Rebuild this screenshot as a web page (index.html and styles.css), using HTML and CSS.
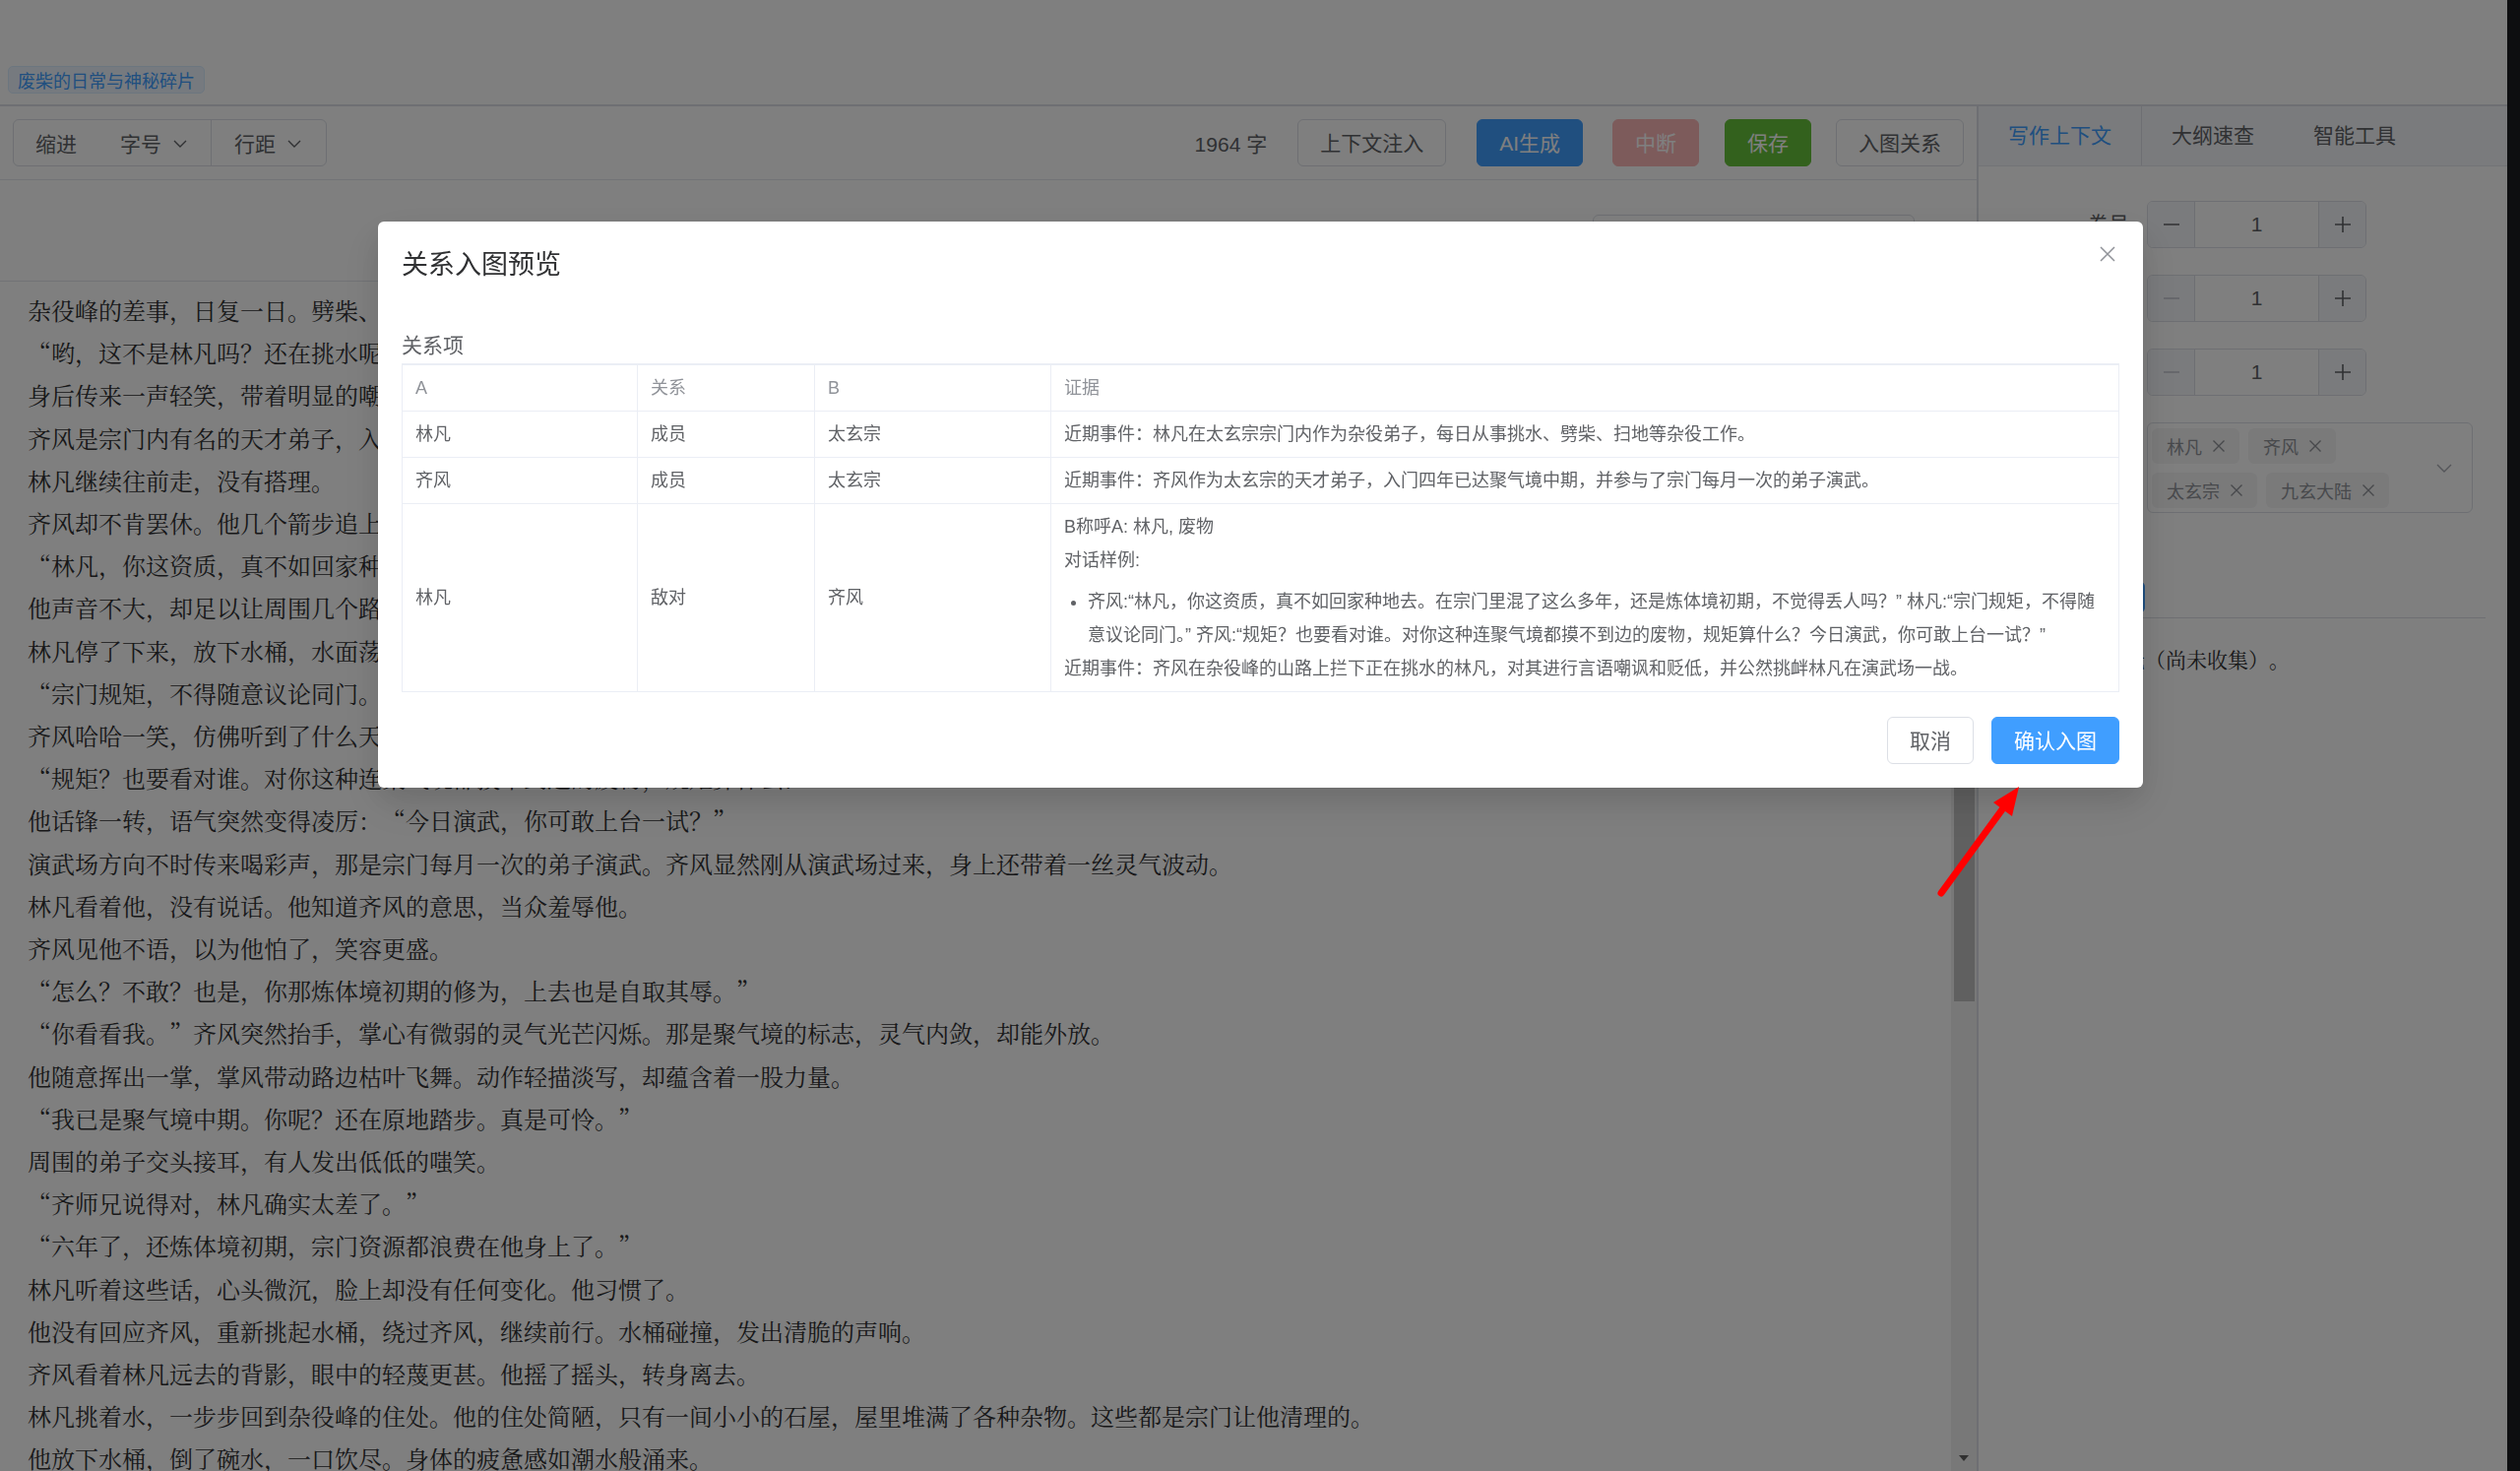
FILE: index.html
```html
<!DOCTYPE html>
<html lang="zh-CN">
<head>
<meta charset="utf-8">
<title>关系入图预览</title>
<link rel="stylesheet" href="styles.css">
</head>
<body>
<div class="app">
  <div class="page">
    <header class="topbar">
      <span class="chapter-tag">废柴的日常与神秘碎片</span>
    </header>
    <div class="main">
      <section class="editor">
        <div class="toolbar">
          <div class="btn-group">
            <span class="seg seg-indent">缩进</span>
            <span class="seg seg-size">字号<svg class="chev" viewBox="0 0 14 8" width="14" height="8"><path d="M1 1l6 6 6-6" fill="none" stroke="#606266" stroke-width="1.4"/></svg></span>
            <span class="seg seg-line">行距<svg class="chev" viewBox="0 0 14 8" width="14" height="8"><path d="M1 1l6 6 6-6" fill="none" stroke="#606266" stroke-width="1.4"/></svg></span>
          </div>
          <span class="word-count">1964 字</span>
          <button class="btn btn-plain tb-ctx">上下文注入</button>
          <button class="btn btn-primary tb-ai">AI生成</button>
          <button class="btn btn-danger-disabled tb-stop">中断</button>
          <button class="btn btn-success tb-save">保存</button>
          <button class="btn btn-plain tb-graph">入图关系</button>
        </div>
        <div class="subbar"><div class="sub-input"></div></div>
        <div class="content">
          <div class="text">
            <p>杂役峰的差事，日复一日。劈柴、挑水、扫地，林凡已经做了整整六年。</p>
            <p>“哟，这不是林凡吗？还在挑水呢？”</p>
            <p>身后传来一声轻笑，带着明显的嘲讽。</p>
            <p>齐风是宗门内有名的天才弟子，入门四年便已踏入聚气境中期。</p>
            <p>林凡继续往前走，没有搭理。</p>
            <p>齐风却不肯罢休。他几个箭步追上来，挡在林凡面前。</p>
            <p>“林凡，你这资质，真不如回家种地去。在宗门里混了这么多年，还是炼体境初期，不觉得丢人吗？”</p>
            <p>他声音不大，却足以让周围几个路过的弟子听见，纷纷停下脚步看热闹。</p>
            <p>林凡停了下来，放下水桶，水面荡起一圈圈涟漪。</p>
            <p>“宗门规矩，不得随意议论同门。”</p>
            <p>齐风哈哈一笑，仿佛听到了什么天大的笑话。</p>
            <p>“规矩？也要看对谁。对你这种连聚气境都摸不到边的废物，规矩算什么？”</p>
            <p>他话锋一转，语气突然变得凌厉：“今日演武，你可敢上台一试？”</p>
            <p>演武场方向不时传来喝彩声，那是宗门每月一次的弟子演武。齐风显然刚从演武场过来，身上还带着一丝灵气波动。</p>
            <p>林凡看着他，没有说话。他知道齐风的意思，当众羞辱他。</p>
            <p>齐风见他不语，以为他怕了，笑容更盛。</p>
            <p>“怎么？不敢？也是，你那炼体境初期的修为，上去也是自取其辱。”</p>
            <p>“你看看我。”齐风突然抬手，掌心有微弱的灵气光芒闪烁。那是聚气境的标志，灵气内敛，却能外放。</p>
            <p>他随意挥出一掌，掌风带动路边枯叶飞舞。动作轻描淡写，却蕴含着一股力量。</p>
            <p>“我已是聚气境中期。你呢？还在原地踏步。真是可怜。”</p>
            <p>周围的弟子交头接耳，有人发出低低的嗤笑。</p>
            <p>“齐师兄说得对，林凡确实太差了。”</p>
            <p>“六年了，还炼体境初期，宗门资源都浪费在他身上了。”</p>
            <p>林凡听着这些话，心头微沉，脸上却没有任何变化。他习惯了。</p>
            <p>他没有回应齐风，重新挑起水桶，绕过齐风，继续前行。水桶碰撞，发出清脆的声响。</p>
            <p>齐风看着林凡远去的背影，眼中的轻蔑更甚。他摇了摇头，转身离去。</p>
            <p>林凡挑着水，一步步回到杂役峰的住处。他的住处简陋，只有一间小小的石屋，屋里堆满了各种杂物。这些都是宗门让他清理的。</p>
            <p>他放下水桶，倒了碗水，一口饮尽。身体的疲惫感如潮水般涌来。</p>
          </div>
          <div class="scrollbar">
            <div class="sb-arrow"><svg viewBox="0 0 10 6" width="10" height="6"><path d="M0 6L5 0L10 6Z" fill="#606060"/></svg></div>
            <div class="sb-thumb"></div>
            <div class="sb-space"></div>
            <div class="sb-arrow"><svg viewBox="0 0 10 6" width="10" height="6"><path d="M0 0L5 6L10 0Z" fill="#606060"/></svg></div>
          </div>
        </div>
      </section>
      <aside class="panel">
        <div class="tabs">
          <div class="tab active">写作上下文</div>
          <div class="tab">大纲速查</div>
          <div class="tab">智能工具</div>
        </div>
        <div class="panel-body">
          <div class="form-item">
            <label>卷号</label>
            <div class="num-input">
              <span class="ni-btn ni-minus"><svg viewBox="0 0 18 18" width="18" height="18"><path d="M1 9H17" stroke="#606266" stroke-width="1.6"/></svg></span>
              <span class="ni-val">1</span>
              <span class="ni-btn ni-plus"><svg viewBox="0 0 18 18" width="18" height="18"><path d="M1 9H17M9 1V17" stroke="#606266" stroke-width="1.6"/></svg></span>
            </div>
          </div>
          <div class="form-item">
            <label>章号</label>
            <div class="num-input">
              <span class="ni-btn ni-minus"><svg viewBox="0 0 18 18" width="18" height="18"><path d="M1 9H17" stroke="#c0c4cc" stroke-width="1.6"/></svg></span>
              <span class="ni-val">1</span>
              <span class="ni-btn ni-plus"><svg viewBox="0 0 18 18" width="18" height="18"><path d="M1 9H17M9 1V17" stroke="#606266" stroke-width="1.6"/></svg></span>
            </div>
          </div>
          <div class="form-item">
            <label>场景</label>
            <div class="num-input">
              <span class="ni-btn ni-minus"><svg viewBox="0 0 18 18" width="18" height="18"><path d="M1 9H17" stroke="#c0c4cc" stroke-width="1.6"/></svg></span>
              <span class="ni-val">1</span>
              <span class="ni-btn ni-plus"><svg viewBox="0 0 18 18" width="18" height="18"><path d="M1 9H17M9 1V17" stroke="#606266" stroke-width="1.6"/></svg></span>
            </div>
          </div>
          <div class="form-item">
            <label>出场</label>
            <div class="select">
              <div class="tags">
                <span class="tag">林凡<svg viewBox="0 0 18 18" width="18" height="18"><path d="M3.5 3.5L14.5 14.5M14.5 3.5L3.5 14.5" stroke="#909399" stroke-width="1.4"/></svg></span>
                <span class="tag">齐风<svg viewBox="0 0 18 18" width="18" height="18"><path d="M3.5 3.5L14.5 14.5M14.5 3.5L3.5 14.5" stroke="#909399" stroke-width="1.4"/></svg></span>
                <span class="tag">太玄宗<svg viewBox="0 0 18 18" width="18" height="18"><path d="M3.5 3.5L14.5 14.5M14.5 3.5L3.5 14.5" stroke="#909399" stroke-width="1.4"/></svg></span>
                <span class="tag">九玄大陆<svg viewBox="0 0 18 18" width="18" height="18"><path d="M3.5 3.5L14.5 14.5M14.5 3.5L3.5 14.5" stroke="#909399" stroke-width="1.4"/></svg></span>
              </div>
              <svg class="select-arrow" viewBox="0 0 16 9" width="16" height="9"><path d="M1 1l7 7 7-7" fill="none" stroke="#a8abb2" stroke-width="1.4"/></svg>
            </div>
          </div>
          <div class="action-row"><button class="btn btn-primary btn-small">刷新上下文</button></div>
          <div class="divider"></div>
          <p class="ctx-text">人物关系：无（尚未收集）。</p>
        </div>
      </aside>
    </div>
  </div>
  <div class="edge"></div>
</div>

<div class="mask"></div>

<div class="dialog">
  <div class="dialog-header">
    <span class="dialog-title">关系入图预览</span>
    <span class="dialog-close"><svg viewBox="0 0 16 16" width="16" height="16"><path d="M1 1L15 15M15 1L1 15" stroke="#909399" stroke-width="1.5"/></svg></span>
  </div>
  <div class="dialog-body">
    <div class="section-label">关系项</div>
    <table class="rel-table">
      <colgroup><col class="c-a"><col class="c-rel"><col class="c-b"><col></colgroup>
      <thead>
        <tr><th>A</th><th class="bl">关系</th><th class="bl">B</th><th class="bl">证据</th></tr>
      </thead>
      <tbody>
        <tr><td>林凡</td><td class="bl">成员</td><td class="bl">太玄宗</td><td class="bl">近期事件：林凡在太玄宗宗门内作为杂役弟子，每日从事挑水、劈柴、扫地等杂役工作。</td></tr>
        <tr><td>齐风</td><td class="bl">成员</td><td class="bl">太玄宗</td><td class="bl">近期事件：齐风作为太玄宗的天才弟子，入门四年已达聚气境中期，并参与了宗门每月一次的弟子演武。</td></tr>
        <tr>
          <td>林凡</td><td class="bl">敌对</td><td class="bl">齐风</td>
          <td class="bl">
            <div>B称呼A: 林凡, 废物</div>
            <div>对话样例:</div>
            <ul><li>齐风:“林凡，你这资质，真不如回家种地去。在宗门里混了这么多年，还是炼体境初期，不觉得丢人吗？” 林凡:“宗门规矩，不得随意议论同门。” 齐风:“规矩？也要看对谁。对你这种连聚气境都摸不到边的废物，规矩算什么？今日演武，你可敢上台一试？”</li></ul>
            <div>近期事件：齐风在杂役峰的山路上拦下正在挑水的林凡，对其进行言语嘲讽和贬低，并公然挑衅林凡在演武场一战。</div>
          </td>
        </tr>
      </tbody>
    </table>
  </div>
  <div class="dialog-footer">
    <button class="btn btn-plain">取消</button>
    <button class="btn btn-confirm">确认入图</button>
  </div>
</div>

<svg class="annotation" viewBox="0 0 2560 1494" width="2560" height="1494">
  <line x1="1972" y1="907" x2="2037" y2="818" stroke="#ff0000" stroke-width="7" stroke-linecap="round"/>
  <polygon points="2051,799 2025,815 2044,829" fill="#ff0000"/>
</svg>
</body>
</html>
```

FILE: styles.css
```css
html, body {
  margin: 0;
  padding: 0;
}
body {
  width: 2560px;
  height: 1494px;
  overflow: hidden;
  background: #fff;
  color: #303133;
  font-family: "Liberation Sans", "Noto Sans CJK SC", sans-serif;
  position: relative;
}
.app {
  display: flex;
  height: 1494px;
}
.page {
  flex: 1;
  min-width: 0;
  display: flex;
  flex-direction: column;
}
.edge {
  width: 13px;
  background: #1b1d21;
}

/* top header */
.topbar {
  height: 108px;
  box-sizing: border-box;
  border-bottom: 2px solid #dcdfe6;
  padding: 67px 0 0 8px;
}
.chapter-tag {
  display: inline-flex;
  align-items: center;
  height: 28px;
  box-sizing: border-box;
  padding: 0 9px;
  font-size: 18px;
  color: #409eff;
  background: #ecf5ff;
  border: 1px solid #d9ecff;
  border-radius: 5px;
}

.main {
  flex: 1;
  min-height: 0;
  display: flex;
}

/* editor */
.editor {
  width: 2008px;
  display: flex;
  flex-direction: column;
}
.toolbar {
  height: 75px;
  box-sizing: border-box;
  border-bottom: 1px solid #e4e7ed;
  display: flex;
  align-items: center;
  padding: 0 13px;
}
.btn-group {
  display: flex;
  height: 48px;
  box-sizing: border-box;
  border: 1px solid #dcdfe6;
  border-radius: 6px;
  font-size: 21px;
  color: #606266;
}
.seg {
  display: flex;
  align-items: center;
  height: 100%;
}
.seg-indent { padding: 0 22px 0 22px; }
.seg-size { padding: 0 24px 0 22px; border-right: 1px solid #dcdfe6; }
.seg-line { padding: 0 25px 0 23px; }
.chev {
  margin-left: 12px;
  margin-top: 2px;
}
.word-count {
  margin-left: auto;
  font-size: 21px;
  color: #606266;
}
.btn {
  height: 48px;
  box-sizing: border-box;
  padding: 0 22px;
  font-family: "Liberation Sans", "Noto Sans CJK SC", sans-serif;
  font-size: 21px;
  line-height: 1;
  border-radius: 6px;
  border: 1px solid #dcdfe6;
  background: #fff;
  color: #606266;
  white-space: nowrap;
}
.btn-primary {
  background: #409eff;
  border-color: #409eff;
  color: #fff;
}
.btn-success {
  background: #67c23a;
  border-color: #67c23a;
  color: #fff;
}
.btn-danger-disabled {
  background: #fab6b6;
  border-color: #fab6b6;
  color: #fff;
}
.tb-ctx { margin-left: 31px; }
.tb-ai { margin-left: 31px; }
.tb-stop { margin-left: 30px; }
.tb-save { margin-left: 26px; }
.tb-graph { margin-left: 25px; }

.subbar {
  height: 103px;
  box-sizing: border-box;
  border-bottom: 1px solid #e4e7ed;
  display: flex;
  justify-content: flex-end;
  padding: 35px 63px 0 0;
}
.sub-input {
  width: 327px;
  height: 48px;
  box-sizing: border-box;
  border: 1px solid #dcdfe6;
  border-radius: 6px;
}

.content {
  flex: 1;
  min-height: 0;
  display: flex;
}
.text {
  flex: 1;
  min-width: 0;
  overflow: hidden;
  padding: 7px 0 0 28px;
  font-family: "Noto Serif CJK SC", "Noto Sans CJK SC", serif;
  font-size: 24px;
  line-height: 43.2px;
  color: #303133;
  text-spacing-trim: space-all;
}
.text p {
  margin: 0;
  white-space: nowrap;
}
.scrollbar {
  width: 26px;
  background: #f1f1f1;
  display: flex;
  flex-direction: column;
  align-items: center;
}
.sb-arrow {
  height: 26px;
  width: 26px;
  display: flex;
  align-items: center;
  justify-content: center;
}
.sb-thumb {
  width: 21px;
  height: 705px;
  background: #c1c1c1;
}
.sb-space { flex: 1; }

/* right panel */
.panel {
  flex: 1;
  min-width: 0;
  border-left: 2px solid #dcdfe6;
  display: flex;
  flex-direction: column;
}
.tabs {
  height: 61px;
  box-sizing: border-box;
  background: #f5f7fa;
  border-bottom: 1px solid #e4e7ed;
  display: flex;
}
.tab {
  padding: 0 30px;
  line-height: 60px;
  font-size: 21px;
  color: #606266;
}
.tab.active {
  color: #409eff;
  border-right: 1px solid #dcdfe6;
}
.panel-body {
  padding: 35px 22px 0 30px;
}
.form-item {
  display: flex;
  align-items: flex-start;
  margin-bottom: 27px;
}
.form-item label {
  width: 141px;
  box-sizing: border-box;
  padding-right: 18px;
  text-align: right;
  font-size: 21px;
  line-height: 48px;
  color: #606266;
}
.num-input {
  width: 223px;
  height: 48px;
  box-sizing: border-box;
  border: 1px solid #dcdfe6;
  border-radius: 6px;
  display: flex;
  overflow: hidden;
}
.ni-btn {
  width: 47px;
  background: #f5f7fa;
  display: flex;
  align-items: center;
  justify-content: center;
}
.ni-minus { border-right: 1px solid #dcdfe6; }
.ni-plus { border-left: 1px solid #dcdfe6; }
.ni-val {
  flex: 1;
  display: flex;
  align-items: center;
  justify-content: center;
  font-size: 21px;
  color: #606266;
}
.select {
  width: 331px;
  min-height: 92px;
  box-sizing: border-box;
  border: 1px solid #dcdfe6;
  border-radius: 6px;
  padding: 5px 20px 4px 4px;
  display: flex;
  align-items: center;
}
.tags {
  width: 262px;
  display: flex;
  flex-wrap: wrap;
  gap: 9px;
}
.tag {
  height: 36px;
  box-sizing: border-box;
  padding: 0 12px 0 15px;
  display: flex;
  align-items: center;
  background: #f4f4f5;
  color: #909399;
  font-size: 18px;
  border-radius: 6px;
}
.tag svg {
  margin-left: 8px;
}
.select-arrow {
  margin-left: auto;
}
.action-row {
  margin-top: 69px;
  height: 33px;
}
.btn-small {
  width: 139px;
  height: 33px;
  padding: 0;
  font-size: 18px;
}
.divider {
  margin-top: 4px;
  border-top: 1px solid #dcdfe6;
}
.ctx-text {
  margin: 23px 0 0 13px;
  font-family: "Noto Serif CJK SC", "Noto Sans CJK SC", serif;
  font-size: 21px;
  line-height: 36px;
  color: #303133;
  text-spacing-trim: space-all;
}

/* modal */
.mask {
  position: fixed;
  left: 0;
  top: 0;
  width: 2560px;
  height: 1494px;
  background: rgba(0, 0, 0, 0.5);
}
.dialog {
  position: fixed;
  left: 384px;
  top: 225px;
  width: 1793px;
  box-sizing: border-box;
  padding: 24px;
  background: #fff;
  border-radius: 6px;
  box-shadow: 0 18px 48px 6px rgba(0, 0, 0, 0.06), 0 12px 30px rgba(0, 0, 0, 0.1);
}
.dialog-header {
  height: 36px;
  display: flex;
  align-items: center;
}
.dialog-title {
  font-size: 27px;
  line-height: 36px;
  color: #303133;
  margin-top: 4px;
}
.dialog-close {
  position: absolute;
  top: -3px;
  right: 0;
  width: 72px;
  height: 72px;
  display: flex;
  align-items: center;
  justify-content: center;
}
.dialog-body {
  margin-top: 50px;
}
.section-label {
  font-size: 21px;
  line-height: 32px;
  color: #606266;
  margin-bottom: 2px;
}
.rel-table {
  width: 100%;
  table-layout: fixed;
  border-collapse: collapse;
  border: 1px solid #ebeef5;
  border-top: 2px solid #ebeef5;
  font-size: 18px;
  color: #606266;
}
.c-a { width: 239px; }
.c-rel { width: 180px; }
.c-b { width: 240px; }
.rel-table th,
.rel-table td {
  padding: 6px 13px;
  line-height: 34px;
  border-bottom: 1px solid #ebeef5;
  text-align: left;
  vertical-align: middle;
  font-weight: 400;
}
.rel-table th {
  color: #909399;
}
.rel-table .bl {
  border-left: 1px solid #ebeef5;
}
.rel-table ul {
  margin: 8px 0 0;
  padding-left: 24px;
}
.dialog-footer {
  display: flex;
  justify-content: flex-end;
  gap: 18px;
  margin-top: 25px;
}
.btn-confirm {
  background: #409eff;
  border-color: #409eff;
  color: #fff;
}

.annotation {
  position: absolute;
  left: 0;
  top: 0;
  pointer-events: none;
}
```
